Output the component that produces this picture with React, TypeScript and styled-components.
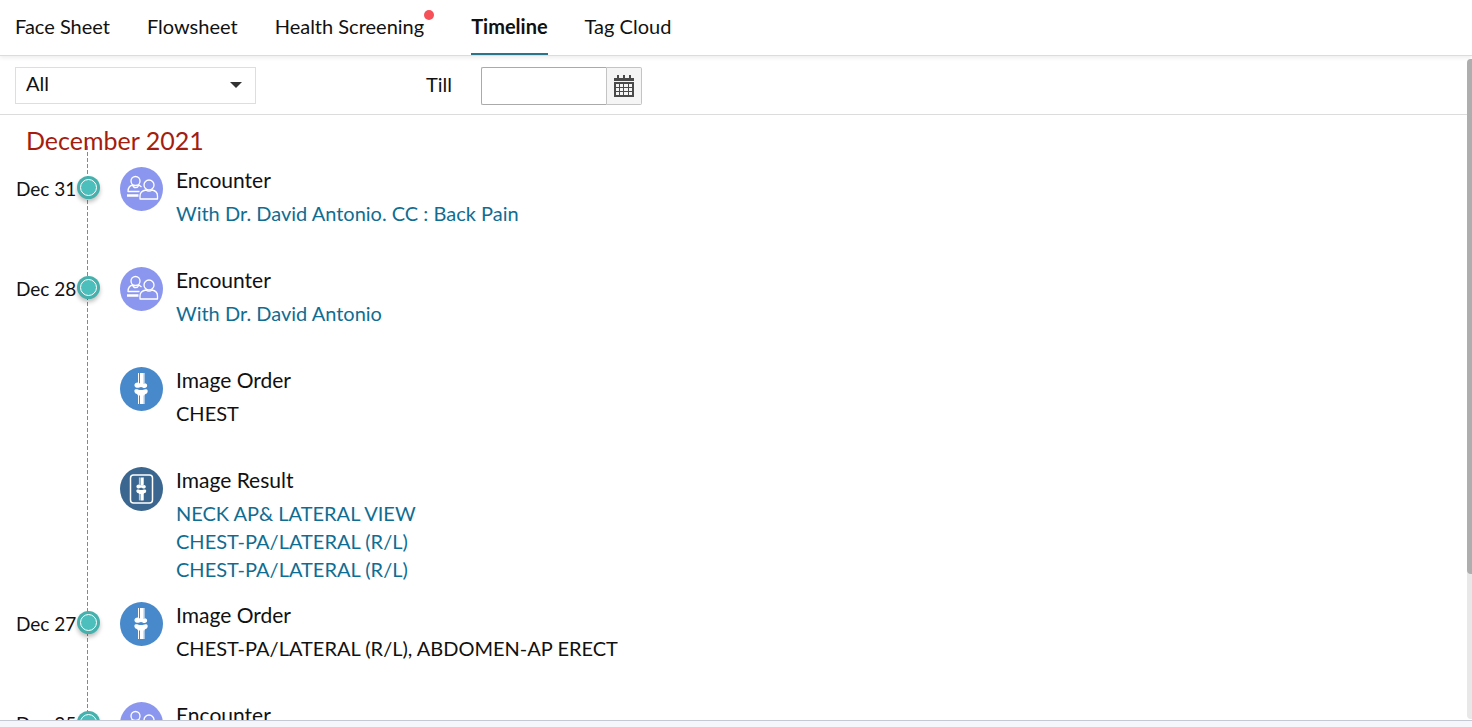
import React from "react";
import styled, { createGlobalStyle } from "styled-components";

const GlobalStyle = createGlobalStyle`
  *, *::before, *::after { box-sizing: border-box; }
  body { margin: 0; background: #fff; color: #111; font-family: Lato, "Liberation Sans", sans-serif; font-size: 20px; font-weight: 400; line-height: 28px; }
  button, input, select { font: inherit; color: inherit; }
`;

const Page = styled.div`
  display: flex;
  flex-direction: column;
  height: 100vh;
`;

const Tabs = styled.nav`
  display: flex;
  flex: none;
  gap: 37px;
  padding: 0 15px;
  border-bottom: 1px solid #dcdcdc;
  box-shadow: 0 2px 4px rgba(0, 0, 0, 0.07);
  z-index: 1;
`;

const Tab = styled.button<{ $active?: boolean }>`
  display: flex;
  padding: 12px 0 13px;
  border: 0;
  border-bottom: 2px solid ${(p) => (p.$active ? "#2a7587" : "transparent")};
  background: none;
  font-weight: ${(p) => (p.$active ? 700 : "inherit")};
  white-space: nowrap;
`;

const AlertDot = styled.span`
  width: 10px;
  height: 10px;
  margin-top: -2px;
  border-radius: 50%;
  background: #f65058;
`;

const Body = styled.div`
  display: flex;
  flex: 1;
  min-height: 0;
`;

const Scroller = styled.main`
  flex: 1;
  min-width: 0;
  overflow-y: auto;
  scrollbar-width: none;
`;

const Track = styled.div`
  flex: none;
  width: 5px;
  margin: 3px 0 1px;
  border-radius: 4px 0 0 4px;
  background: #e8e8e8;
`;

const Thumb = styled.div`
  height: 78%;
  border-radius: 4px 0 0 4px;
  background: #aeaeae;
`;

const Filters = styled.form`
  display: flex;
  align-items: flex-start;
  padding: 11px 15px 9px;
  border-bottom: 1px solid #dcdcdc;
`;

const SelectBox = styled.div`
  position: relative;
  width: 241px;
  margin-right: 170px;
`;

const Select = styled.select`
  display: block;
  width: 100%;
  height: 37px;
  padding: 0 40px 5px 10px;
  border: 1px solid #dedede;
  border-radius: 0;
  background: #fff;
  appearance: none;
`;

const Caret = styled.svg`
  position: absolute;
  top: 15px;
  right: 14px;
  width: 12px;
  height: 6px;
  fill: #333;
  pointer-events: none;
`;

const TillLabel = styled.label`
  width: 55px;
  padding-top: 3px;
`;

const DateInput = styled.input`
  width: 126px;
  height: 38px;
  padding: 0 8px;
  border: 1px solid #aaa;
  border-right-color: #c4c4c4;
  border-radius: 2px 0 0 2px;
  background: #fff;
`;

const CalendarButton = styled.button`
  display: flex;
  align-items: center;
  justify-content: center;
  width: 35px;
  height: 38px;
  padding: 0;
  border: 1px solid #c4c4c4;
  border-left: 0;
  border-radius: 0 2px 2px 0;
  background: #f5f5f5;
`;

const Timeline = styled.section`
  position: relative;

  &::before {
    content: "";
    position: absolute;
    top: 31px;
    bottom: 0;
    left: 87px;
    width: 1px;
    background: repeating-linear-gradient(to bottom, #888 0 4px, transparent 4px 6px);
  }
`;

const Month = styled.h2`
  margin: 0;
  padding: 8px 26px 10px;
  color: #a51c10;
  font-size: 25px;
  font-weight: inherit;
  line-height: 34px;
`;

const Entries = styled.ol`
  margin: 0;
  padding: 0;
  list-style: none;
`;

const Entry = styled.li`
  display: grid;
  grid-template-columns: 61px 23px 43px 1fr;
  align-items: start;
  min-height: 100px;
  padding: 0 16px 19px;
`;

const EntryDate = styled.time`
  padding-top: 8px;
  font-size: 19px;
  white-space: nowrap;
`;

const Marker = styled.span`
  position: relative;
  width: 23px;
  height: 23px;
  margin-top: 9px;
  padding: 3px;
  border-radius: 50%;
  background: #45b0ac;
  box-shadow: 0 3px 4px rgba(0, 0, 0, 0.25);

  &::before {
    content: "";
    display: block;
    height: 17px;
    border: 1px solid #fff;
    border-radius: 50%;
    background: #4cbfbc;
  }
`;

const EntryIcon = styled.svg`
  grid-column: 3;
  width: 43px;
  height: 44px;
  margin-left: 20px;
`;

const Details = styled.div`
  grid-column: 4;
  padding-left: 33px;
`;

const Title = styled.h3`
  margin: 0 0 6px;
  font-size: 21px;
  font-weight: inherit;
  line-height: 26px;
`;

const Line = styled.p`
  margin: 0;
`;

const DetailLink = styled.a`
  color: #0f6d92;
  text-decoration: none;
`;

const Footer = styled.footer`
  flex: none;
  height: 7px;
  border-top: 1px solid #c3c8d2;
  background: #f4f6fb;
`;

type Kind = "encounter" | "order" | "result";

function Joint() {
  return (
    <>
      <path d="M18.5 6v10M24 6v10M18.5 28v9M24 28v9" stroke="#fff" strokeWidth="1" />
      <path d="M20 6h3.500v11H20zM20 27h3.500v10H20z" fill="#fff" />
      <path d="M18 15.500l2 1h4c3.500-1 4.500 4 1 4.500-2 .3-2.500-1-4-1s-2 1-4 .8c-3.500-.3-3.500-5.500 1-5.300zM15 22.500c2-.8 3.500.5 6 .5s4-1.500 6-.5c1.500 1 .5 4.500-1.500 4.500l-1.500 1.500h-6l-1-1.500c-2 0-3.500-3-2-4.500z" fill="#fff" />
    </>
  );
}

function KindIcon({ kind }: { kind: Kind }) {
  const fill = { encounter: "#8b97ee", order: "#4789cb", result: "#3a668f" }[kind];
  return (
    <EntryIcon viewBox="0 0 43 44" aria-hidden="true">
      <ellipse cx="21.5" cy="22" rx="21.5" ry="22" fill={fill} />
      {kind === "encounter" && (
        <g fill="none" stroke="#fff" strokeWidth="1.300" strokeLinejoin="round">
          <circle cx="15.500" cy="14" r="4.500" />
          <path d="M12.500 18c-3 .8-4.500 3-4.500 6.500h11.500M12.500 18c1 3.500 5 3.500 6.500 0l2.500 2" />
          <path d="M7 28.500h11.500" strokeWidth="2.500" />
          <circle cx="29" cy="18" r="5" />
          <path d="M20 32v-3c0-4 3-5.500 6-6 1.500 1.500 4.500 1.500 6 0 3 .5 5.500 2 5.500 6v3z" />
        </g>
      )}
      {kind === "order" && <Joint />}
      {kind === "result" && (
        <>
          <rect x="10.500" y="8" width="22" height="28" rx="3" fill="none" stroke="#fff" strokeWidth="1.500" />
          <g transform="translate(5.700 6) scale(.74)"><Joint /></g>
        </>
      )}
    </EntryIcon>
  );
}

interface EntryData {
  date?: string;
  kind: Kind;
  title: string;
  lines: string[];
  linked?: boolean;
}

const entries: EntryData[] = [
  { date: "Dec 31", kind: "encounter", title: "Encounter", lines: ["With Dr. David Antonio. CC : Back Pain"], linked: true },
  { date: "Dec 28", kind: "encounter", title: "Encounter", lines: ["With Dr. David Antonio"], linked: true },
  { kind: "order", title: "Image Order", lines: ["CHEST"] },
  { kind: "result", title: "Image Result", lines: ["NECK AP& LATERAL VIEW", "CHEST-PA/LATERAL (R/L)", "CHEST-PA/LATERAL (R/L)"], linked: true },
  { date: "Dec 27", kind: "order", title: "Image Order", lines: ["CHEST-PA/LATERAL (R/L), ABDOMEN-AP ERECT"] },
  { date: "Dec 25", kind: "encounter", title: "Encounter", lines: [] },
];

export default function App() {
  return (
    <Page>
      <GlobalStyle />
      <Tabs>
        <Tab>Face Sheet</Tab>
        <Tab>Flowsheet</Tab>
        <Tab>Health Screening<AlertDot /></Tab>
        <Tab $active>Timeline</Tab>
        <Tab>Tag Cloud</Tab>
      </Tabs>
      <Body>
        <Scroller>
          <Filters>
            <SelectBox>
              <Select aria-label="Entry type"><option>All</option></Select>
              <Caret viewBox="0 0 12 6" aria-hidden="true"><path d="M0 0h12L6 6z" /></Caret>
            </SelectBox>
            <TillLabel htmlFor="till">Till</TillLabel>
            <DateInput id="till" type="text" />
            <CalendarButton type="button" aria-label="Choose date">
              <svg width="20" height="22" viewBox="0 0 20 22" aria-hidden="true">
                <path d="M0 3h3V0h2v3h4V0h2v3h4V0h2v3h3v3H0zM0 7h20v15H0z" fill="#4a4a4a" />
                <path d="M2 9h3v3H2zM6 9h3v3H6zM10 9h4v3h-4zM15 9h3v3h-3zM2 13h3v3H2zM6 13h3v3H6zM10 13h4v3h-4zM15 13h3v3h-3zM2 17h3v3H2zM6 17h3v3H6zM10 17h4v3h-4zM15 17h3v3h-3z" fill="#f5f5f5" />
              </svg>
            </CalendarButton>
          </Filters>
          <Timeline>
            <Month>December 2021</Month>
            <Entries>
              {entries.map((entry, i) => (
                <Entry key={i}>
                  {entry.date && <EntryDate>{entry.date}</EntryDate>}
                  {entry.date && <Marker />}
                  <KindIcon kind={entry.kind} />
                  <Details>
                    <Title>{entry.title}</Title>
                    {entry.lines.map((line, j) => (
                      <Line key={j}>{entry.linked ? <DetailLink href="#">{line}</DetailLink> : line}</Line>
                    ))}
                  </Details>
                </Entry>
              ))}
            </Entries>
          </Timeline>
        </Scroller>
        <Track><Thumb /></Track>
      </Body>
      <Footer />
    </Page>
  );
}
